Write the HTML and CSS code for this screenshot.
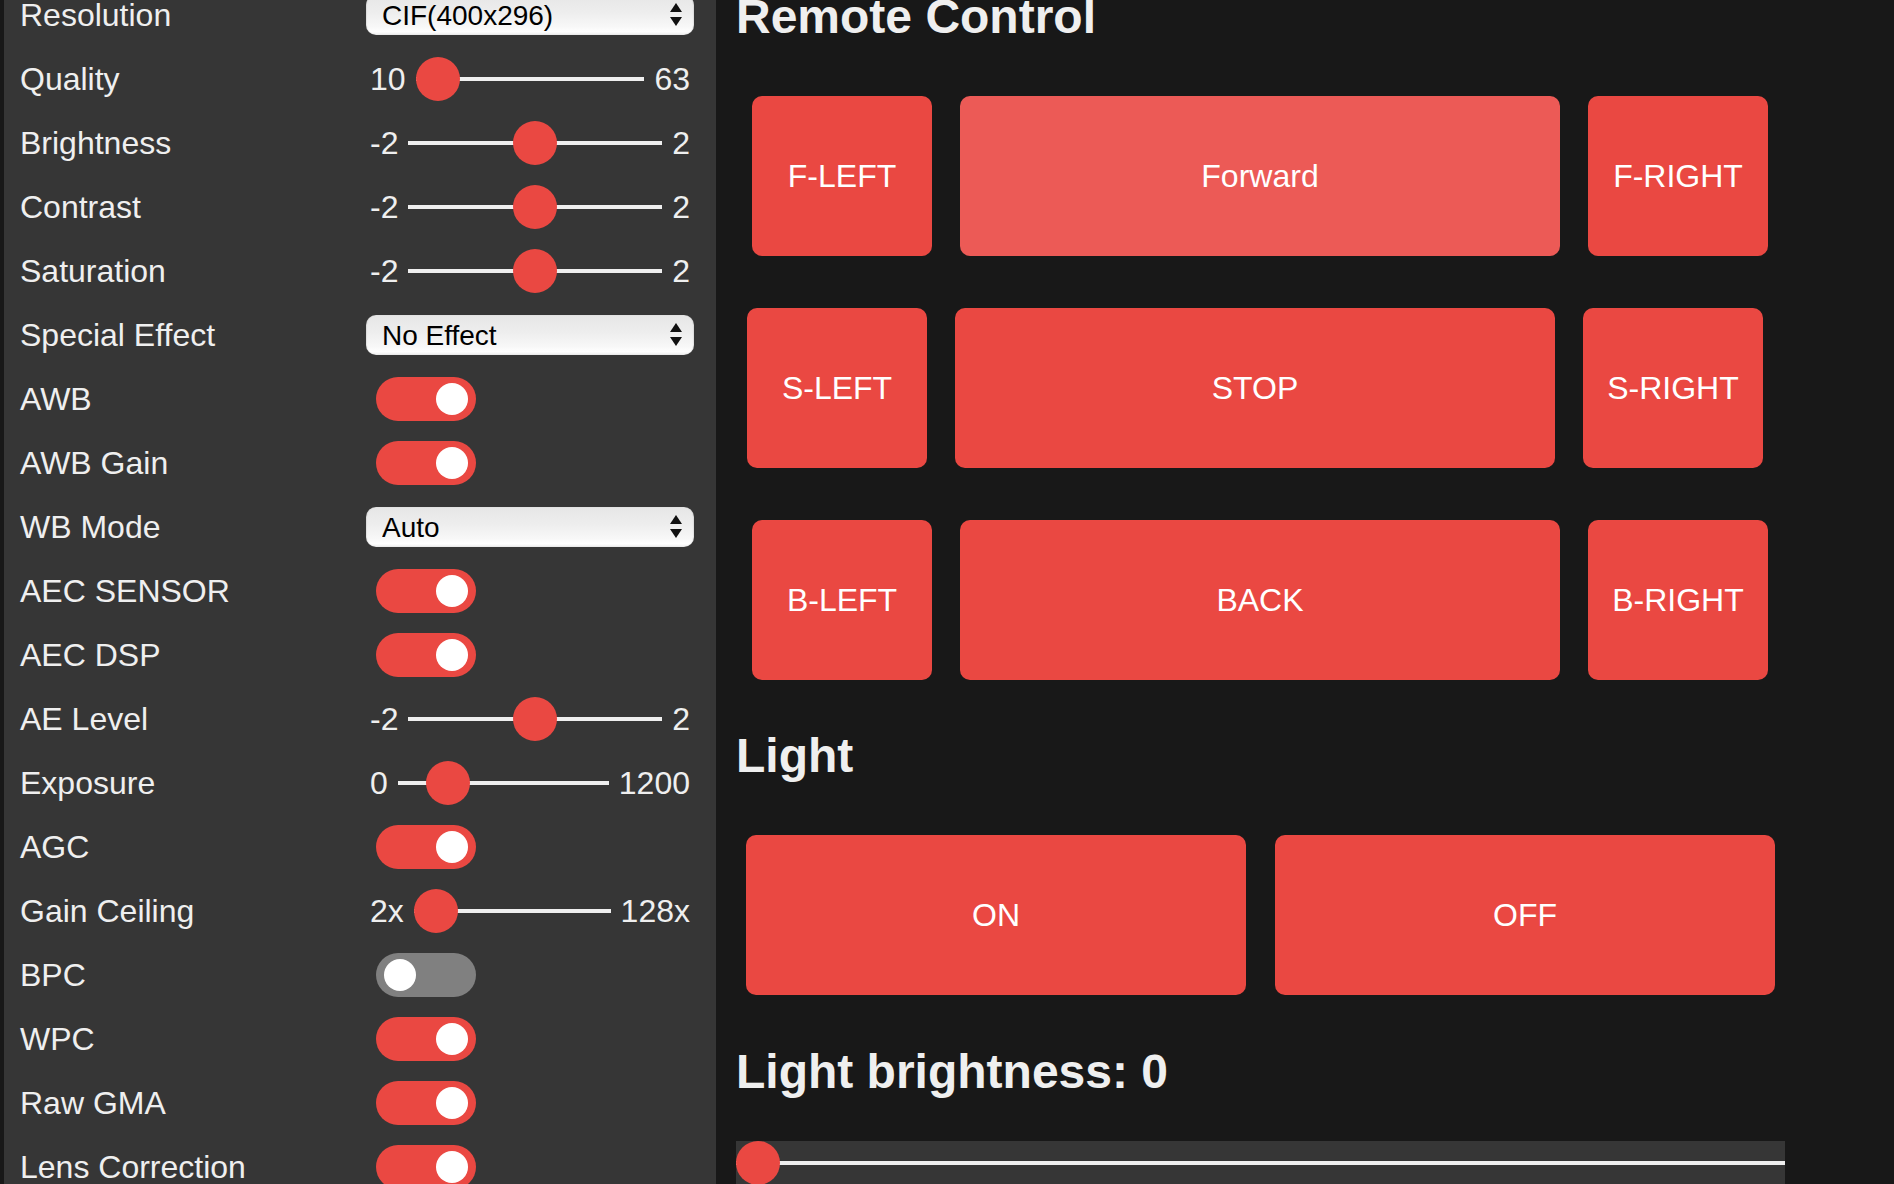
FILE: index.html
```html
<!DOCTYPE html>
<html lang="en">
<head>
<meta charset="utf-8">
<title>ESP32 Camera Car</title>
<link rel="stylesheet" href="styles.css">
</head>
<body>
<section class="main">
  <nav class="menu">
    <div class="input-group">
      <label for="framesize">Resolution</label>
      <div class="select">
        <select id="framesize"><option>CIF(400x296)</option></select>
        <svg viewBox="0 0 12 24" aria-hidden="true"><polygon points="6,0 12,9 0,9" fill="#111"/><polygon points="0,14 12,14 6,23" fill="#111"/></svg>
      </div>
    </div>
    <div class="input-group">
      <label for="quality">Quality</label>
      <span class="range-min">10</span><input type="range" id="quality" min="10" max="63" value="10"><span class="range-max">63</span>
    </div>
    <div class="input-group">
      <label for="brightness">Brightness</label>
      <span class="range-min">-2</span><input type="range" id="brightness" min="-2" max="2" value="0"><span class="range-max">2</span>
    </div>
    <div class="input-group">
      <label for="contrast">Contrast</label>
      <span class="range-min">-2</span><input type="range" id="contrast" min="-2" max="2" value="0"><span class="range-max">2</span>
    </div>
    <div class="input-group">
      <label for="saturation">Saturation</label>
      <span class="range-min">-2</span><input type="range" id="saturation" min="-2" max="2" value="0"><span class="range-max">2</span>
    </div>
    <div class="input-group">
      <label for="special_effect">Special Effect</label>
      <div class="select">
        <select id="special_effect"><option>No Effect</option></select>
        <svg viewBox="0 0 12 24" aria-hidden="true"><polygon points="6,0 12,9 0,9" fill="#111"/><polygon points="0,14 12,14 6,23" fill="#111"/></svg>
      </div>
    </div>
    <div class="input-group">
      <label for="awb">AWB</label>
      <div class="switch"><input id="awb" type="checkbox" checked><label class="slider" for="awb"></label></div>
    </div>
    <div class="input-group">
      <label for="awb_gain">AWB Gain</label>
      <div class="switch"><input id="awb_gain" type="checkbox" checked><label class="slider" for="awb_gain"></label></div>
    </div>
    <div class="input-group">
      <label for="wb_mode">WB Mode</label>
      <div class="select">
        <select id="wb_mode"><option>Auto</option></select>
        <svg viewBox="0 0 12 24" aria-hidden="true"><polygon points="6,0 12,9 0,9" fill="#111"/><polygon points="0,14 12,14 6,23" fill="#111"/></svg>
      </div>
    </div>
    <div class="input-group">
      <label for="aec">AEC SENSOR</label>
      <div class="switch"><input id="aec" type="checkbox" checked><label class="slider" for="aec"></label></div>
    </div>
    <div class="input-group">
      <label for="aec2">AEC DSP</label>
      <div class="switch"><input id="aec2" type="checkbox" checked><label class="slider" for="aec2"></label></div>
    </div>
    <div class="input-group">
      <label for="ae_level">AE Level</label>
      <span class="range-min">-2</span><input type="range" id="ae_level" min="-2" max="2" value="0"><span class="range-max">2</span>
    </div>
    <div class="input-group">
      <label for="aec_value">Exposure</label>
      <span class="range-min">0</span><input type="range" id="aec_value" min="0" max="1200" value="204"><span class="range-max">1200</span>
    </div>
    <div class="input-group">
      <label for="agc">AGC</label>
      <div class="switch"><input id="agc" type="checkbox" checked><label class="slider" for="agc"></label></div>
    </div>
    <div class="input-group">
      <label for="gainceiling">Gain Ceiling</label>
      <span class="range-min">2x</span><input type="range" id="gainceiling" min="0" max="6" value="0"><span class="range-max">128x</span>
    </div>
    <div class="input-group">
      <label for="bpc">BPC</label>
      <div class="switch"><input id="bpc" type="checkbox"><label class="slider" for="bpc"></label></div>
    </div>
    <div class="input-group">
      <label for="wpc">WPC</label>
      <div class="switch"><input id="wpc" type="checkbox" checked><label class="slider" for="wpc"></label></div>
    </div>
    <div class="input-group">
      <label for="raw_gma">Raw GMA</label>
      <div class="switch"><input id="raw_gma" type="checkbox" checked><label class="slider" for="raw_gma"></label></div>
    </div>
    <div class="input-group">
      <label for="lenc">Lens Correction</label>
      <div class="switch"><input id="lenc" type="checkbox" checked><label class="slider" for="lenc"></label></div>
    </div>
  </nav>

  <div class="content">
    <h2 class="title-remote">Remote Control</h2>
    <div class="btn-row">
      <button class="btn side">F-LEFT</button>
      <button class="btn wide active">Forward</button>
      <button class="btn side">F-RIGHT</button>
    </div>
    <div class="btn-row shift">
      <button class="btn side">S-LEFT</button>
      <button class="btn wide">STOP</button>
      <button class="btn side">S-RIGHT</button>
    </div>
    <div class="btn-row">
      <button class="btn side">B-LEFT</button>
      <button class="btn wide">BACK</button>
      <button class="btn side">B-RIGHT</button>
    </div>

    <h2 class="title-light">Light</h2>
    <div class="light-row">
      <button class="btn half">ON</button>
      <button class="btn half">OFF</button>
    </div>

    <h2 class="title-bright">Light brightness: 0</h2>
    <input type="range" class="light-range" min="0" max="255" value="0">
  </div>
</section>
</body>
</html>
```

FILE: styles.css
```css
* {
  box-sizing: border-box;
}

html,
body {
  margin: 0;
  height: 100%;
}

body {
  background: #181818;
  color: #efefef;
  font-family: "Liberation Sans", Arial, Helvetica, sans-serif;
  font-size: 32px;
  overflow: hidden;
}

.main {
  display: flex;
  align-items: flex-start;
}

/* ---------- settings menu ---------- */
.menu {
  display: flex;
  flex-direction: column;
  flex: none;
  width: 712px;
  margin: -33px 0 0 4px;
  padding: 16px;
  background: #363636;
  border-radius: 8px;
}

.input-group {
  display: flex;
  align-items: center;
  height: 44px;
  line-height: 44px;
  margin: 10px 0;
}

.input-group > label {
  flex: 0 0 340px;
  padding-right: 20px;
  white-space: nowrap;
}

.range-min,
.range-max {
  padding: 0 10px;
  white-space: nowrap;
}

input[type="range"] {
  -webkit-appearance: none;
  appearance: none;
  flex: 1;
  min-width: 0;
  height: 44px;
  margin: 0;
  padding: 0;
  background: #363636;
  outline: none;
}

input[type="range"]::-webkit-slider-runnable-track {
  height: 4px;
  background: #efefef;
  border: 0;
  border-radius: 0;
}

input[type="range"]::-webkit-slider-thumb {
  -webkit-appearance: none;
  appearance: none;
  width: 44px;
  height: 44px;
  margin-top: -20px;
  border: 0;
  border-radius: 50%;
  background: #ea4842;
}

/* select */
.select {
  flex: 1;
  display: flex;
  align-items: center;
  height: 40px;
  margin: 0 6px;
  padding-right: 12px;
  border-radius: 10px;
  background: linear-gradient(to bottom, #e6e6e6 0%, #eeeeee 45%, #f8f8f8 80%, #ffffff 92%, #ececec 100%);
  box-shadow: inset 1px 0 1px rgba(0, 0, 0, 0.08), inset -1px 0 1px rgba(0, 0, 0, 0.08);
}

.select select {
  -webkit-appearance: none;
  appearance: none;
  flex: 1;
  min-width: 0;
  height: 40px;
  padding: 0 0 0 16px;
  border: 0;
  background: transparent;
  color: #000;
  font-family: "Liberation Sans", Arial, Helvetica, sans-serif;
  font-size: 28px;
  outline: none;
}

.select svg {
  flex: none;
  width: 12px;
  height: 24px;
}

/* toggle switch */
.switch {
  display: flex;
  align-items: center;
  height: 44px;
}

.switch input {
  display: none;
}

.slider {
  position: relative;
  display: block;
  width: 100px;
  height: 44px;
  margin-left: 16px;
  border-radius: 22px;
  background: #808080;
}

.slider::before {
  content: "";
  position: absolute;
  left: 8px;
  top: 6px;
  width: 32px;
  height: 32px;
  border-radius: 50%;
  background: #fff;
}

input:checked + .slider {
  background: #ea4842;
}

input:checked + .slider::before {
  transform: translateX(52px);
}

/* ---------- remote control ---------- */
.content {
  flex: none;
  width: 1049px;
  margin-left: 20px;
}

.content h2 {
  margin: 0;
  font-size: 48px;
  font-weight: bold;
  line-height: 56px;
  white-space: nowrap;
}

.title-remote {
  margin-top: -11px !important;
}

.btn-row {
  display: flex;
  gap: 28px;
  margin-top: 51px;
  padding-left: 16px;
}

.btn-row + .btn-row {
  margin-top: 52px;
}

.btn-row.shift {
  padding-left: 11px;
}

.btn {
  display: block;
  height: 160px;
  padding: 0;
  border: 0;
  border-radius: 10px;
  background: #ea4842;
  color: #fff;
  font-family: "Liberation Sans", Arial, Helvetica, sans-serif;
  font-size: 32px;
  outline: none;
}

.btn.side {
  width: 180px;
}

.btn.wide {
  width: 600px;
}

.btn.active {
  background: #ec5a56;
}

.title-light {
  margin-top: 48px !important;
}

.light-row {
  display: flex;
  gap: 29px;
  margin-top: 51px;
  padding-left: 10px;
}

.btn.half {
  width: 500px;
}

.title-bright {
  margin-top: 49px !important;
}

.light-range {
  display: block;
  width: 100%;
  margin-top: 41px !important;
}
```
